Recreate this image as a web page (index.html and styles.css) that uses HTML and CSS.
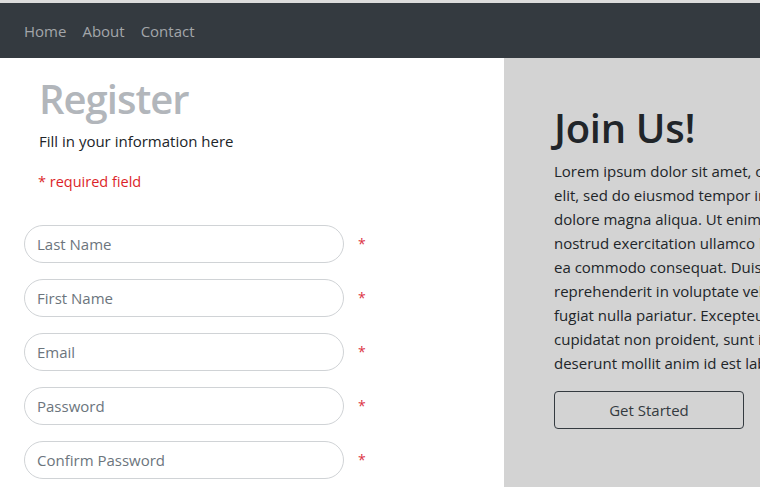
FILE: index.html
```html
<!DOCTYPE html>
<html lang="en">
<head>
<meta charset="utf-8">
<title>Register</title>
<link rel="stylesheet" href="styles.css">
</head>
<body>
<nav class="navbar">
  <a class="nav-link" href="#">Home</a>
  <a class="nav-link" href="#">About</a>
  <a class="nav-link" href="#">Contact</a>
</nav>
<main class="page">
  <section class="left">
    <div class="intro">
      <h1 class="title">Register</h1>
      <p class="lead">Fill in your information here</p>
      <p class="required-note">* required field</p>
    </div>
    <form class="form">
      <div class="field"><input class="input" type="text" placeholder="Last Name"><span class="star">*</span></div>
      <div class="field"><input class="input" type="text" placeholder="First Name"><span class="star">*</span></div>
      <div class="field"><input class="input" type="email" placeholder="Email"><span class="star">*</span></div>
      <div class="field"><input class="input" type="password" placeholder="Password"><span class="star">*</span></div>
      <div class="field"><input class="input" type="password" placeholder="Confirm Password"><span class="star">*</span></div>
    </form>
  </section>
  <section class="right">
    <h1 class="join">Join Us!</h1>
    <p class="body-text">Lorem ipsum dolor sit amet, consectetur adipiscing<br>elit, sed do eiusmod tempor incididunt ut labore et<br>dolore magna aliqua. Ut enim ad minim veniam, quis<br>nostrud exercitation ullamco laboris nisi ut aliquip ex<br>ea commodo consequat. Duis aute irure dolor in<br>reprehenderit in voluptate velit esse cillum dolore eu<br>fugiat nulla pariatur. Excepteur sint occaecat<br>cupidatat non proident, sunt in culpa qui officia<br>deserunt mollit anim id est laborum.</p>
    <button class="btn" type="button">Get Started</button>
  </section>
</main>
</body>
</html>
```
FILE: styles.css
```css
html, body {
  margin: 0;
  padding: 0;
  overflow: hidden;
  height: 100%;
}
body {
  font-family: "Open Sans", "Noto Sans", sans-serif;
  font-size: 15px;
  line-height: 24px;
  color: #212529;
  background: #fff;
  border-top: 3px solid #dcdcdc;
  box-sizing: border-box;
}
.navbar {
  display: flex;
  align-items: center;
  height: 55px;
  padding: 0 16px;
  background: #343a40;
}
.nav-link {
  padding: 0 8px;
  color: #a3a6aa;
  text-decoration: none;
  font-size: 15px;
}
.page {
  display: grid;
  grid-template-columns: 504px 1fr;
  height: calc(100% - 55px);
}
.left {
  padding: 17px 0 0 24px;
}
.intro {
  padding-left: 15px;
}
.title {
  margin: 0;
  font-size: 40px;
  line-height: 48px;
  font-weight: 600;
  letter-spacing: -1px;
  color: #b2b6bb;
}
.lead {
  margin: 6px 0 0;
  font-size: 15px;
}
.required-note {
  margin: 17px 0 0 -1px;
  color: #dc1f2a;
  font-size: 14.5px;
}
.form {
  margin-top: 31px;
  display: flex;
  flex-direction: column;
  gap: 16px;
}
.field {
  display: flex;
  align-items: center;
}
.input {
  box-sizing: border-box;
  width: 320px;
  height: 38px;
  padding: 0 12px;
  border: 1px solid #d0d3d6;
  border-radius: 19px;
  font-family: inherit;
  font-size: 15px;
  color: #495057;
  background: #fff;
  outline: none;
}
.input::placeholder {
  color: #6c757d;
}
.star {
  margin-left: 14px;
  color: #dc3545;
  font-size: 14px;
}
.right {
  background: #d3d3d3;
  padding: 46px 0 0 50px;
  overflow: hidden;
}
.join {
  margin: 0 0 7px;
  font-size: 40px;
  line-height: 48px;
  font-weight: 600;
  letter-spacing: -0.3px;
  color: #212529;
  white-space: nowrap;
}
.body-text {
  margin: 0 0 16px;
  white-space: nowrap;
  color: #212529;
}
.btn {
  box-sizing: border-box;
  width: 190px;
  height: 38px;
  border: 1px solid #343a40;
  border-radius: 4px;
  background: transparent;
  color: #343a40;
  font-family: inherit;
  font-size: 15px;
}
```
